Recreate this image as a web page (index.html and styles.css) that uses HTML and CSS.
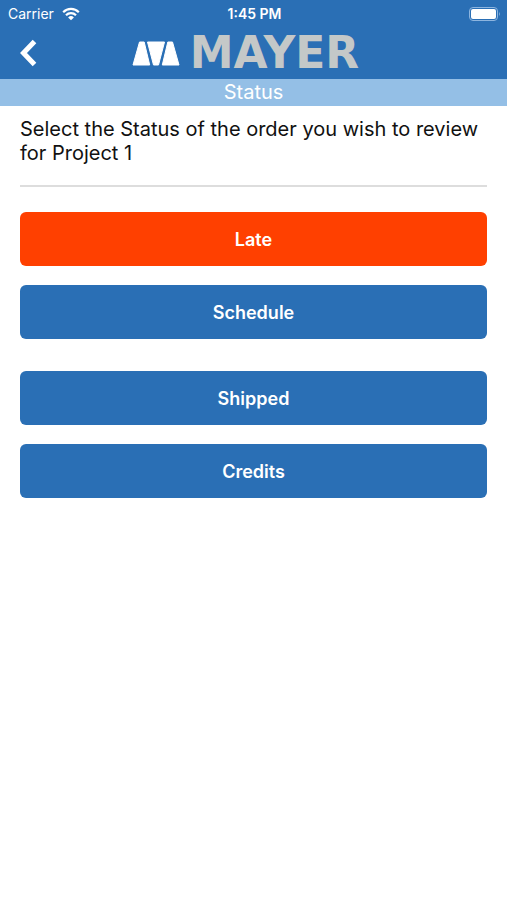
FILE: index.html
```html
<!DOCTYPE html>
<html lang="en">

<head>
  <meta charset="UTF-8">
  <meta name="viewport" content="width=device-width, initial-scale=1.0">
  <title>Status</title>
  <link rel="stylesheet" href="styles.css">
</head>

<body>
  <header class="header">
    <div class="statusBar">
      <div class="carrier">
        <span>Carrier</span>
        <svg class="wifi" width="18" height="14" viewBox="0 0 18 14" aria-hidden="true">
          <path d="M1.2 5.2a11 11 0 0 1 15.6 0M4 8.2a7 7 0 0 1 10 0" fill="none" stroke="#fff" stroke-width="2.2" />
          <path d="M9 13.2L6.1 10.4a4.1 4.1 0 0 1 5.8 0z" fill="#fff" />
        </svg>
      </div>
      <span class="time">1:45 PM</span>
      <div class="power">
        <svg width="32" height="14" viewBox="0 0 32 14" aria-hidden="true">
          <rect x="0.5" y="0.5" width="28" height="13" rx="3.5" fill="none" stroke="#8db5df" />
          <rect x="2" y="2" width="25" height="10" rx="2" fill="#fff" />
          <path d="M30 4.7q1.8 2.3 0 4.6z" fill="#8db5df" />
        </svg>
      </div>
    </div>

    <nav class="navBar">
      <button class="back" type="button" aria-label="Back">
        <svg width="18" height="28" viewBox="0 0 18 28" aria-hidden="true">
          <path d="M14.5 2.5L3.5 14L14.5 25.5" fill="none" stroke="#fff" stroke-width="5" />
        </svg>
      </button>
      <div class="logo">
        <svg width="48" height="25" viewBox="0 0 48 25" aria-hidden="true">
          <g fill="#fff" stroke="#fff" stroke-linejoin="round">
            <path d="M7.5 1h4.700L17.700 24H1z" />
            <path d="M15.500 1h17L26.500 24h-5z" />
            <path d="M35.800 1h4.700L47 24H30.300z" />
          </g>
        </svg>
        <span class="logoName">MAYER</span>
      </div>
    </nav>
  </header>

  <h1 class="pageTitle">Status</h1>

  <main class="content">
    <p class="intro">Select the Status of the order you wish to review for Project 1</p>
    <div class="buttonGroup">
      <button class="statusButton late" type="button">Late</button>
      <button class="statusButton" type="button">Schedule</button>
    </div>
    <div class="buttonGroup">
      <button class="statusButton" type="button">Shipped</button>
      <button class="statusButton" type="button">Credits</button>
    </div>
  </main>
</body>

</html>
```
FILE: styles.css
```css
* {
  box-sizing: border-box;
}

body {
  margin: 0;
  background-color: #fff;
  color: #111;
  font-family: Inter, "Liberation Sans", sans-serif;
}

.header {
  background-color: #2a6fb5;
  color: #fff;
}

/* Carrier, clock and battery */
.statusBar {
  display: grid;
  grid-template-columns: 1fr auto 1fr;
  align-items: center;
  height: 27px;
  padding: 0 6px 0 8px;
  font-size: 14px;
}

.carrier {
  display: flex;
  align-items: center;
  gap: 8px;
}

.time {
  font-weight: 600;
}

.power {
  display: flex;
  justify-content: flex-end;
}

.navBar {
  display: grid;
  grid-template-columns: 40px 1fr 56px;
  align-items: center;
  height: 52px;
  padding: 0 16px;
}

.back {
  display: flex;
  padding: 0 4px;
  background: none;
  border: none;
  cursor: pointer;
}

.logo {
  display: flex;
  align-items: center;
  justify-content: center;
  gap: 10px;
}

.logoName {
  color: #c4c8c8;
  font-family: "DejaVu Sans", sans-serif;
  font-size: 44px;
  font-weight: bold;
  line-height: 52px;
}

.pageTitle {
  margin: 0;
  background-color: #94bfe6;
  color: #fff;
  font-size: 20px;
  font-weight: 400;
  line-height: 27px;
  text-align: center;
}

.content {
  padding: 11px 20px;
}

.intro {
  margin: 0 0 25px;
  padding-bottom: 20px;
  border-bottom: 2px solid #ddd;
  font-size: 20px;
  line-height: 24px;
}

.buttonGroup {
  display: flex;
  flex-direction: column;
  gap: 19px;
  margin-bottom: 32px;
}

.statusButton {
  width: 100%;
  height: 54px;
  background-color: #2a6fb5;
  color: #fff;
  border: none;
  border-radius: 6px;
  font-family: inherit;
  font-size: 18px;
  font-weight: 600;
  cursor: pointer;
}

.statusButton.late {
  background-color: #ff4000;
}
```
